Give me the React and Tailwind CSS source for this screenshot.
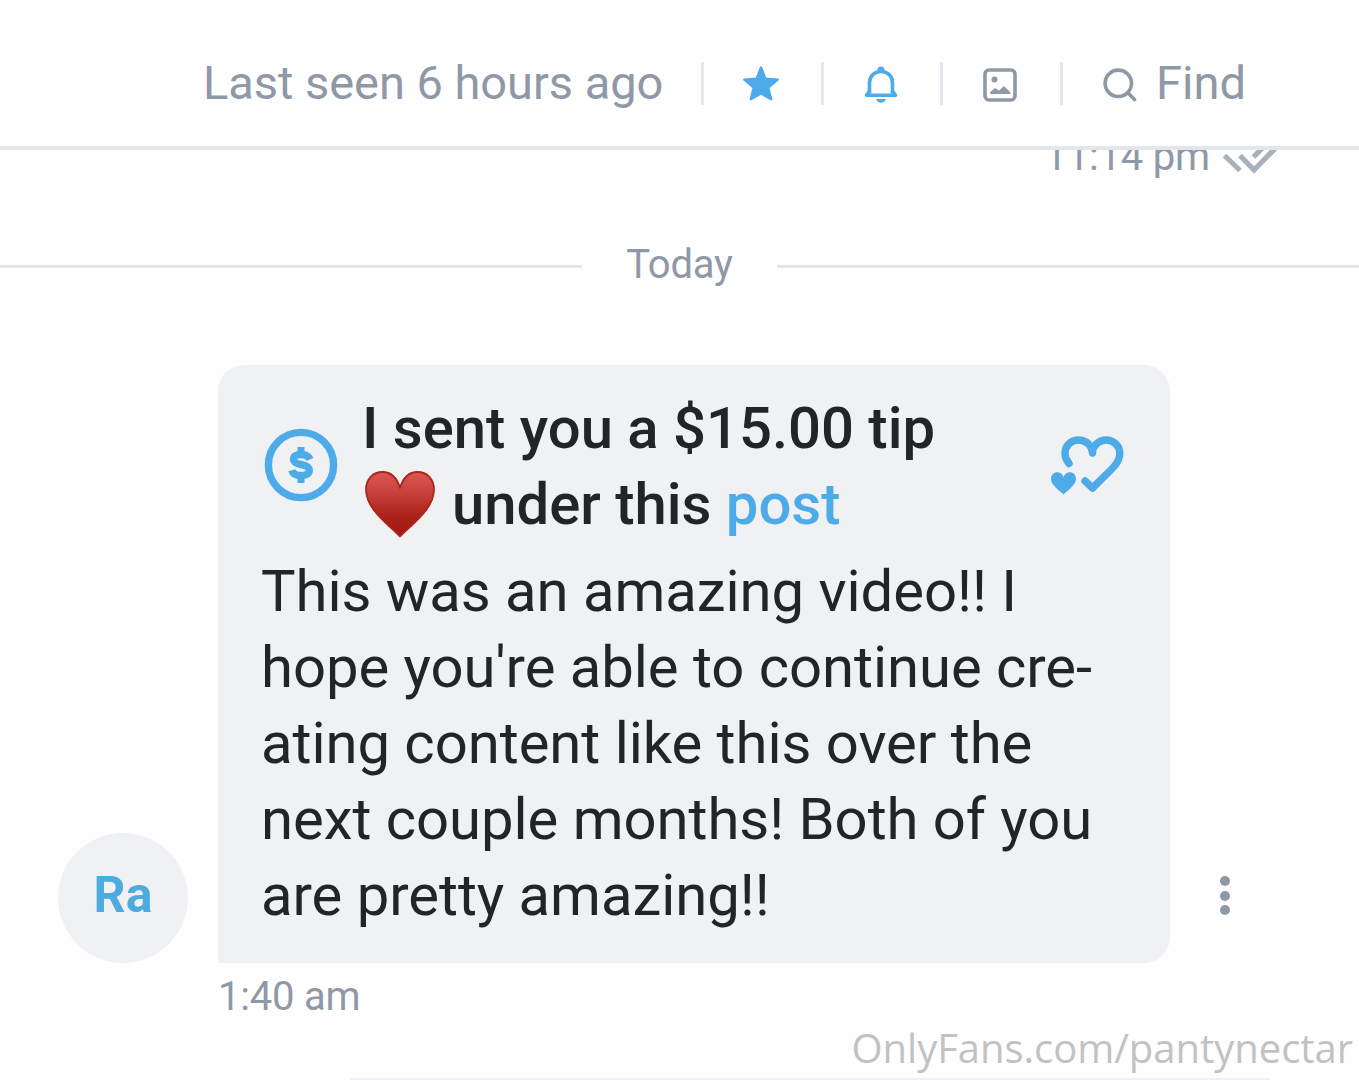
const BODY_LINES = [
    'This was an amazing video!! I',
    "hope you're able to continue cre-",
    'ating content like this over the',
    'next couple months! Both of you',
    'are pretty amazing!!',
];

function StarIcon() {
    return (
        <svg viewBox="0 0 36 35" className="w-9 h-[35px]" fill="#4dabea" stroke="#4dabea" strokeWidth="2.4" strokeLinejoin="round">
            <path d="M18 1.5 22.4 12.7 34.7 13.7 25.3 21.5 28.2 33.2 18 27.5 7.8 33.2 10.7 21.5 1.3 13.7 13.6 12.7Z" />
        </svg>
    );
}

function BellIcon() {
    return (
        <svg viewBox="0 0 34 37" className="w-[34px] h-[37px]" fill="none">
            <path d="M5.5 27.5V17C5.5 10.5 10 5.5 17 5.5S28.5 10.5 28.5 17v10.5" stroke="#4dabea" strokeWidth="3.6" />
            <path d="M2.5 29.2h29M5.5 25 3 28.5M28.5 25 31 28.5" stroke="#4dabea" strokeWidth="3.6" strokeLinecap="round" />
            <path d="M13.5 5.5V4a3.5 3.5 0 0 1 7 0v1.5Z" fill="#4dabea" />
            <path d="M12 33h10c-.8 2.3-2.7 3.7-5 3.7s-4.2-1.4-5-3.7Z" fill="#4dabea" />
        </svg>
    );
}

function GalleryIcon() {
    return (
        <svg viewBox="0 0 34 34" className="w-[34px] h-[34px]" fill="none">
            <rect x="2" y="2" width="30" height="30" rx="4" stroke="#8f98a7" strokeWidth="3.6" />
            <circle cx="11.5" cy="11.5" r="3" fill="#8f98a7" />
            <path d="M7.5 25.5v-1l4.5-4 4 2.7 5-4.7 6 6v1Z" fill="#8f98a7" stroke="#8f98a7" strokeLinejoin="round" />
        </svg>
    );
}

function SearchIcon() {
    return (
        <svg viewBox="0 0 34 34" className="w-[34px] h-[34px]" fill="none" stroke="#8f98a7" strokeWidth="3.6" strokeLinecap="round">
            <circle cx="15.3" cy="15.3" r="13.2" />
            <path d="m24.8 24.8 6.7 6.7" />
        </svg>
    );
}

function DoubleCheckIcon() {
    return (
        <svg viewBox="0 0 58 30" className="w-[58px] h-[30px]" fill="none" stroke="#a9b1bc" strokeWidth="5.2">
            <path d="m3.5 9.5 15.500 15" />
            <path d="m19 9.5 14 14.500L56.500 0" />
            <path d="m32.500 11 11-11" />
        </svg>
    );
}

function CoinIcon() {
    return (
        <svg viewBox="0 0 74 74" className="w-[74px] h-[74px]" fill="none" stroke="#4dabea">
            <circle cx="37" cy="37" r="32.6" strokeWidth="7.4" />
            <path
                d="M46 31.5C44.5 28 41.5 26.5 37 26.5c-4.5 0-7.5 1.7-7.5 4.8 0 3.3 3 4.3 7.5 5.2s8.3 2 8.3 5.8c0 3.4-3.3 5.2-8.3 5.2-4.8 0-8.1-1.6-9.1-5.3"
                strokeWidth="7.4"
            />
            <path d="M37 19v7M37 47v8" strokeWidth="7" />
        </svg>
    );
}

function RedHeart() {
    return (
        <svg viewBox="0 0 70 67" className="w-[70px] h-[67px] shrink-0">
            <defs>
                <linearGradient id="heart" x1="0" y1="0" x2="0" y2="1">
                    <stop offset="0" stopColor="#dc5752" />
                    <stop offset="0.3" stopColor="#c9433e" />
                    <stop offset="0.7" stopColor="#a92118" />
                    <stop offset="1" stopColor="#a0180f" />
                </linearGradient>
            </defs>
            <path
                d="M35 65.5C26 55.5 1 39 1 18.5 1 8 8 1 17.5 1 26 1 32 7 35 17 38 7 44 1 52.5 1 62 1 69 8 69 18.5 69 39 44 55.5 35 65.5Z"
                fill="url(#heart)"
                stroke="#ad241d"
                strokeWidth="1.8"
                strokeLinejoin="round"
            />
        </svg>
    );
}

function HeartsIcon() {
    return (
        <svg viewBox="0 0 74 60" className="w-[74px] h-[60px]" fill="none">
            <path
                d="M19 27.5C16 24 15 20.500 15 17.500 15 9.500 21 4 28.500 4c7.500 0 14 5.500 14 13C42.500 9.500 49 4 56 4c7.500 0 13.800 5.500 13.800 13.500 0 6-3 10.500-8 15.500L42.500 52 35 45"
                stroke="#4dabea"
                strokeWidth="7.4"
                strokeLinecap="round"
                strokeLinejoin="round"
            />
            <path
                d="M13.5 58.5C10 55 1 49 1 43c0-4 3-6.7 6.3-6.7 2.900 0 5 1.700 6.200 4.700 1.200-3 3.300-4.700 6.200-4.700C23 36.300 26 39 26 43c0 6-9 12-12.500 15.500Z"
                fill="#4dabea"
            />
        </svg>
    );
}

function Header() {
    return (
        <header className="flex h-[150px] items-center border-b-4 border-[#e3e6ea] pl-[203px] pt-5">
            <span className="w-[498px] whitespace-nowrap text-[47px] leading-[56px] tracking-[-0.04px]">Last seen 6 hours ago</span>
            <div className="flex h-[43px] w-[119.7px] items-center justify-center border-l-3 border-[#e3e6ea] pr-[3px] pt-px">
                <StarIcon />
            </div>
            <div className="flex h-[43px] w-[119.7px] items-center justify-center border-l-3 border-[#e3e6ea] pr-[3px] pt-[2px]">
                <BellIcon />
            </div>
            <div className="flex h-[43px] w-[119.7px] items-center justify-center border-l-3 border-[#e3e6ea] pr-[3px] pt-[3px]">
                <GalleryIcon />
            </div>
            <div className="flex h-[43px] items-center gap-[19px] border-l-3 border-[#e3e6ea] pl-[40px]">
                <div className="pt-[3px]">
                    <SearchIcon />
                </div>
                <span className="text-[47px] leading-[56px]">Find</span>
            </div>
        </header>
    );
}

export default function App() {
    return (
        <div className="flex h-[1080px] w-[1359px] flex-col overflow-hidden bg-[#fefefe] font-['Roboto',sans-serif] text-[#8f98a7]">
            <Header />

            {/* Tail of the previous message, scrolled under the header */}
            <div className="flex h-[36px] items-end justify-end gap-[11px] overflow-hidden pr-[80px]">
                <span className="text-[40px] leading-[58px] tracking-[-0.2px]">11:14 pm</span>
                <div className="pb-[10px]">
                    <DoubleCheckIcon />
                </div>
            </div>

            <div className="mt-[50px] flex h-[60px] items-center">
                <div className="h-[3px] flex-1 bg-[#e3e6ea]" />
                <span className="w-[195px] pb-[2px] text-center text-[40px] leading-[58px] tracking-[-0.2px]">Today</span>
                <div className="h-[3px] flex-1 bg-[#e3e6ea]" />
            </div>

            <div className="mt-[69px] flex items-end pl-[58px]">
                <div className="flex size-[130px] items-center justify-center rounded-full bg-[#f0f1f3] pb-[5px] text-[50px] font-bold text-[#4dabdf]">
                    Ra
                </div>
                <div className="ml-[30px] h-[598px] w-[952px] rounded-[26px] rounded-bl-none bg-[#f0f1f3] px-[43px] pt-[25px] text-[58px] leading-[76px] text-[#222427]">
                    <div className="flex items-center">
                        <div className="w-[102px] pb-[2px] pl-[3px]">
                            <CoinIcon />
                        </div>
                        <div className="flex-1 whitespace-nowrap font-medium">
                            <p className="-ml-px">I sent you a $15.00 tip</p>
                            <p className="flex items-center gap-[17px] pl-[2px]">
                                <RedHeart />
                                <span>
                                    under this <span className="text-[#4dabea]">post</span>
                                </span>
                            </p>
                        </div>
                        <div className="mr-[3px]">
                            <HeartsIcon />
                        </div>
                    </div>
                    <div className="mt-[11px] whitespace-nowrap tracking-[-0.04px]">
                        {BODY_LINES.map((line) => (
                            <p key={line}>{line}</p>
                        ))}
                    </div>
                </div>
                <div className="mb-[48px] ml-[50px] flex flex-col gap-[4.5px]">
                    <span className="size-[10px] rounded-full bg-[#8f98a7]" />
                    <span className="size-[10px] rounded-full bg-[#8f98a7]" />
                    <span className="size-[10px] rounded-full bg-[#8f98a7]" />
                </div>
            </div>

            <div className="flex h-[68px] items-center pl-[218px] text-[40px] leading-[60px] tracking-[-0.2px]">1:40 am</div>
            <footer className="flex flex-1 flex-col justify-between">
                <span className="self-end pr-[6px] font-['Open_Sans',sans-serif] text-[40px] leading-[34px] tracking-[-0.03px] text-[#c2c2c2]">
                    OnlyFans.com/pantynectar
                </span>
                <div className="ml-[350px] h-[2px] w-[920px] bg-[#f0f1f6]" />
            </footer>
        </div>
    );
}
